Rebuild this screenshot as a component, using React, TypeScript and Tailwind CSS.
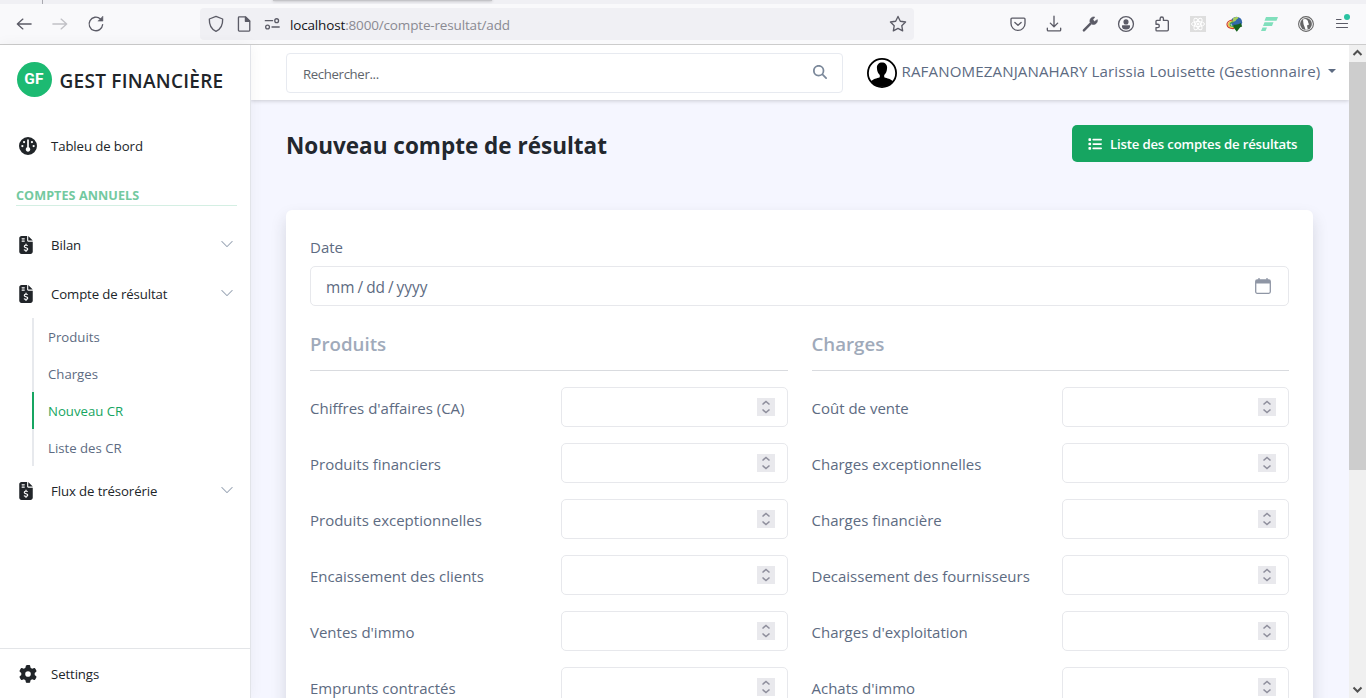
import React from "react";
import { FaGauge, FaFileInvoiceDollar, FaGear, FaList, FaMagnifyingGlass } from "react-icons/fa6";
import { BsChevronDown } from "react-icons/bs";

const S = ({ children }: { children: React.ReactNode }) => (
  <svg width="20" height="20" viewBox="-1 -1 18 18" fill="none" stroke="#5b5b66" strokeWidth="1.2" strokeLinecap="round" strokeLinejoin="round" className="shrink-0">
    {children}
  </svg>
);

function Browser() {
  return (
    <div className="shrink-0">
      <div className="flex h-1 bg-[#f0f0f4]">
        <div className="ml-[42px] h-1 w-px bg-[#a9a9b0]" />
        <div className="ml-[230px] h-px w-[219px] bg-[#c4c4c8] shadow-[0_0_3px_rgba(0,0,0,0.45)]" />
      </div>
      <div className="flex h-[41px] items-center border-b border-[#cccccc] bg-[#f9f9fb]">
        <div className="flex w-[200px] items-center gap-4 pl-[14px]">
          <S><path d="M14.4 8H2M7 3.6 2 8 7 12.4" /></S>
          <div className="opacity-35"><S><path d="M1.6 8H14M9 3.6 14 8 9 12.4" /></S></div>
          <S><path d="M14 8.5A6.1 6.1 0 1 1 12 3.4" /><path d="M10 5.4h4.200V1.2z" fill="#5b5b66" strokeWidth="0.5" /></S>
        </div>
        <div className="flex h-8 w-[714px] items-center rounded bg-[#f0f0f4]">
          <div className="flex w-[90px] items-center gap-2 pl-[6px]">
            <S><path d="M8 1.2 14 3.5c.2 5.400-1.200 9-6 11.100C3.200 12.500 1.800 8.900 2 3.500z" /></S>
            <S><path d="M3 2.300c0-.4.300-.7.700-.7h5.800L13.200 5.300v8.400c0 .4-.3.700-.7.700H3.700c-.4 0-.7-.3-.7-.7z" /><path d="M9.300 1.800v3.700h3.700z" fill="#5b5b66" /></S>
            <S><path d="M2 5h6.500M8 10.700h6.500" /><circle cx="12.200" cy="5" r="1.700" /><circle cx="4" cy="10.700" r="1.700" /></S>
          </div>
          <div className="flex-1 whitespace-nowrap pt-[2px] text-[13.500px] tracking-[-0.16px] text-[#8a8a92]"><span className="text-[#15141a]">localhost</span>:8000/compte-resultat/add</div>
          <div className="pr-[6px]"><S><path d="m8 1.200 2.100 4.300 4.700.7-3.400 3.300.8 4.700L8 12l-4.200 2.200.8-4.700L1.200 6.200l4.700-.7z" /></S></div>
        </div>
        <div className="ml-[94px] flex items-center gap-4">
          <S><path d="M2.600 2.700h10.800c.5 0 .9.400.9.900V7.500a6.300 6.300 0 0 1-12.600 0V3.600c0-.5.400-.9.900-.9z" /><path d="m5.200 6.600 2.800 2.600 2.800-2.600" /></S>
          <S><path d="M8 1v9.400M4.700 7.200 8 10.500l3.300-3.300M2 11.800v1.500c0 .5.400.9.900.9h10.200c.5 0 .9-.4.900-.9v-1.500" /></S>
          <S><path d="m2.500 13.700 6-6" strokeWidth="2.200" /><path d="M8 6.300c-.6-2.600 1.300-5 4.200-4.600L10.600 4.200l1.500 1.500 2.500-1.600C15 7 12.600 9 10 8.200z" fill="#5b5b66" strokeWidth="0.6" /></S>
          <S><circle cx="8" cy="8" r="6.700" /><circle cx="8" cy="6.100" r="1.700" fill="#5b5b66" /><path d="M4.900 9.800h6.200c0 1.800-1.400 2.600-3.100 2.600s-3.100-.8-3.100-2.600z" fill="#5b5b66" /></S>
          <S><path d="M6.300 4.800V3.200a1.500 1.500 0 0 1 3 0v1.600h3.400c.6 0 1 .4 1 1v7.400c0 .6-.4 1-1 1H3.400c-.5 0-.8-.3-.8-.8v-2.200h1.500a1.500 1.500 0 0 0 0-3H2.600V5.600c0-.5.300-.8.800-.8z" /></S>
          <svg width="20" height="20" viewBox="0 0 20 20" fill="none" stroke="#fff" className="shrink-0"><path d="M2 2h16v16H2z" fill="#dedede" stroke="none" /><circle cx="10" cy="10" r="1" fill="#fff" /><ellipse cx="10" cy="10" rx="6.500" ry="2.500" /><ellipse cx="10" cy="10" rx="6.500" ry="2.500" transform="rotate(60 10 10)" /><ellipse cx="10" cy="10" rx="6.500" ry="2.500" transform="rotate(120 10 10)" /></svg>
          <svg width="20" height="20" viewBox="0 0 20 20" fill="none" className="shrink-0">
            <circle cx="12.500" cy="8.300" r="5.600" fill="#3468ac" />
            <path d="M9 4.300c2-1.500 4-1.500 5.500-.8-.5 1.500-2 1.500-3 3.500L9 8z" fill="#a9cf5c" />
            <path d="M8.500 6C5 6.300 2.700 8.500 3 10.700c.4 2.600 3.500 4 7 3.800" stroke="#d0442e" strokeWidth="1.200" />
            <path d="M9 7C6.300 7.300 4.300 9 4.500 10.700c.3 1.800 2.500 2.700 5.500 2.700" stroke="#efc431" strokeWidth="1.200" />
            <path d="M9.300 8.200C7.500 8.300 6 9.500 6 10.700c0 1 1.500 1.600 4 1.600" stroke="#43a047" strokeWidth="1.200" />
            <path d="M9.500 10.500c2.500.5 5 0 7.300-1.500l1.400 3.500-2 .8-3.400 4.500-3.300-4.300z" fill="#17621c" />
          </svg>
          <svg width="20" height="20" viewBox="0 0 20 20" fill="#80dfbc" className="shrink-0"><path d="M6 3h12l-1.500 3.700h-12zM4.500 8.300h9L12 12H3zM2.500 13.500h4.500L5.500 17H1z" /></svg>
          <svg width="20" height="20" viewBox="0 0 20 20" fill="none" stroke="#666" className="shrink-0"><circle cx="10" cy="10" r="7.400" strokeWidth="1.100" /><circle cx="10" cy="10" r="5.900" fill="#666" stroke="none" /><path d="M7 5.600c2.500-1.400 5 0 5.200 2.800l.8 2.200-2 1 .8 3.800-2.300.3C9 13 7.300 11 7.300 8.500z" fill="#fff" stroke="none" /></svg>
          <svg width="20" height="20" viewBox="0 0 20 20" fill="none" stroke="#5b5b66" strokeWidth="1.200" strokeLinecap="round" className="shrink-0 overflow-visible"><path d="M4.500 5.500H9M4.500 9.500h11M4.500 13.500h11" /><circle cx="15" cy="3" r="3" fill="#2ac3a2" stroke="none" /></svg>
        </div>
      </div>
    </div>
  );
}

const Item = ({ icon, label, chevron, className }: { icon: React.ReactNode; label: string; chevron?: boolean; className?: string }) => (
  <a className={`flex h-[49px] items-center pl-[19px] pr-[16px] text-[#212529] ${className ?? ""}`}>
    <span className="flex w-[32px]">{icon}</span>
    <span className="flex-1 whitespace-nowrap pt-[2px] text-[13.200px] tracking-[-0.1px]">{label}</span>
    {chevron && <BsChevronDown className="mb-[2px] size-[14px] text-[#9ca7b6]" />}
  </a>
);

const invoice = <FaFileInvoiceDollar className="h-[18px] w-[14px]" />;

function Sidebar() {
  return (
    <aside className="z-10 flex w-[251px] shrink-0 flex-col border-r border-[#e2e4e9] bg-white shadow-[0_0_14px_rgba(34,39,46,0.05)]">
      <div className="flex h-[68px] items-center pl-[16.500px]">
        <div className="flex size-[35px] items-center justify-center rounded-full bg-[#1cba72] pt-px font-['Roboto',sans-serif] text-[15.500px] font-bold tracking-[0.3px] text-white">GF</div>
        <div className="ml-[8px] mt-[4px] whitespace-nowrap text-[19px] font-[550] tracking-[0.27px] text-[#212529]">GEST FINANCIÈRE</div>
      </div>
      <Item className="mt-[8px]" icon={<FaGauge className="size-[18px]" />} label="Tableu de bord" />
      <div className="ml-4 mr-[13px] mt-[17px] h-[19px] whitespace-nowrap border-b border-[#d4efe3] text-[12.600px] font-bold leading-[17px] tracking-[0.07px] text-[#73c9a0]">COMPTES ANNUELS</div>
      <Item className="mt-[14px]" icon={invoice} label="Bilan" chevron />
      <Item icon={invoice} label="Compte de résultat" chevron />
      <div className="ml-8 text-[13.200px] text-[#5d6b82]">
        {["Produits", "Charges", "Nouveau CR", "Liste des CR"].map((t) => (
          <div key={t} className={`flex h-[37px] items-center border-l-2 pl-[14px] pt-[2px] ${t === "Nouveau CR" ? "border-[#16a561] text-[#16a561]" : "border-[#e7e9ed]"}`}>{t}</div>
        ))}
      </div>
      <Item icon={invoice} label="Flux de trésorérie" chevron />
      <div className="mt-auto h-[50px] border-t border-[#e3e5e8]">
        <Item icon={<FaGear className="size-[18px]" />} label="Settings" />
      </div>
    </aside>
  );
}

function Header() {
  return (
    <header className="z-[5] flex h-[55px] shrink-0 items-center bg-white pl-[35px] shadow-[0_1px_4px_rgba(0,0,0,0.18)]">
      <div className="flex h-10 w-[557px] items-center justify-between rounded border border-[#e7eaf0] pl-4 pr-[15px] text-[13.200px] text-[#60656b]">
        <span className="pt-[5px] tracking-[-0.35px]">Rechercher...</span>
        <FaMagnifyingGlass className="mb-[2px] size-[14px] text-[#7b889a]" />
      </div>
      <svg width="30" height="30" viewBox="0 0 30 30" className="ml-6 shrink-0">
        <circle cx="15" cy="15" r="14.100" fill="#fff" stroke="#000" strokeWidth="1.800" />
        <path d="M15 4.500c3.200 0 5.200 2.200 5.100 5.200-.1 3.400-1.300 6-2.900 7.200v2.300c3 1.300 6.800 1.500 8.800 4.300a14 14 0 0 1-22 0c2-2.800 5.800-3 8.800-4.300v-2.300c-1.600-1.200-2.800-3.800-2.900-7.200-.1-3 1.900-5.200 5.100-5.200z" />
      </svg>
      <span className="mb-[2px] ml-[4.500px] whitespace-nowrap text-[15.100px] tracking-[0.12px] text-[#5d6b82]">RAFANOMEZANJANAHARY Larissia Louisette (Gestionnaire)</span>
      <svg width="8" height="4" viewBox="0 0 8 4" className="mb-[4px] ml-2 shrink-0" fill="#5d6b82"><path d="M0 0h8L4 4z" /></svg>
    </header>
  );
}

const Row = ({ label }: { label: string }) => (
  <div className="mb-4 flex h-10 items-center">
    <label className="w-[250.5px] whitespace-nowrap pt-[3px] text-[15px] text-[#5d6b82]">{label}</label>
    <div className="flex h-10 flex-1 items-center justify-end rounded-[5px] border border-[#e7e8ec] pr-3">
      <svg width="18" height="18" viewBox="0 0 18 18" fill="none" stroke="#8f8f9d" strokeWidth="1.600"><path d="M0 0h18v18H0z" fill="#e9e9ed" stroke="none" /><path d="M5.500 6.500 9 3.500l3.500 3M5.500 11.500l3.500 3 3.500-3" /></svg>
    </div>
  </div>
);

const Column = ({ title, rows }: { title: string; rows: string[] }) => (
  <div className="flex-1">
    <h5 className="mb-4 h-[41px] border-b border-[#d9dbdf] text-[18.700px] font-semibold leading-7 text-[#a0aaba]">{title}</h5>
    {rows.map((r) => <Row key={r} label={r} />)}
  </div>
);

export default function App() {
  return (
    <div className="flex h-[698px] w-[1366px] flex-col overflow-hidden bg-white font-['Open_Sans','Noto_Sans',sans-serif]">
      <Browser />
      <div className="flex min-h-0 flex-1">
        <Sidebar />
        <div className="flex w-[1098px] flex-col overflow-hidden bg-[#f5f6ff]">
          <Header />
          <main className="flex flex-1 flex-col overflow-hidden pl-[35px] pr-[36px]">
            <div className="mt-[25px] flex h-[37px] items-center justify-between">
              <h1 className="whitespace-nowrap pt-[5px] text-[22.500px] font-bold text-[#22272e]">Nouveau compte de résultat</h1>
              <a className="flex h-[37px] w-[241px] items-center rounded-[5px] bg-[#16a561] pl-4 text-white">
                <FaList className="size-[14px]" />
                <span className="ml-2 whitespace-nowrap pt-[2px] text-[13.200px] font-semibold tracking-[-0.18px]">Liste des comptes de résultats</span>
              </a>
            </div>
            <section className="mt-12 h-[700px] shrink-0 rounded-[6px] bg-white px-6 pt-6 shadow-[0_8px_16px_rgba(34,39,46,0.15)]">
              <div className="flex h-8 items-start pt-[2px] text-[15px] text-[#5d6b82]">Date</div>
              <div className="flex h-10 items-center justify-between rounded-[5px] border border-[#e7e8ec] pl-[15px] pr-[17px] text-[15px] text-[#5d6b82]">
                <span className="pt-1 text-[15.400px] [word-spacing:-1px]">mm / dd / yyyy</span>
                <svg width="16" height="16" viewBox="0 0 16 16" fill="none" stroke="#8f96a5" strokeWidth="1.300"><rect x=".7" y="2" width="14.600" height="13.300" rx="1.500" /><path d="M1 2h14v3.500H1z" fill="#8f96a5" stroke="none" /><path d="M4 0v3M12 0v3" /></svg>
              </div>
              <div className="mt-6 flex gap-6">
                <Column title="Produits" rows={["Chiffres d'affaires (CA)", "Produits financiers", "Produits exceptionnelles", "Encaissement des clients", "Ventes d'immo", "Emprunts contractés"]} />
                <Column title="Charges" rows={["Coût de vente", "Charges exceptionnelles", "Charges financière", "Decaissement des fournisseurs", "Charges d'exploitation", "Achats d'immo"]} />
              </div>
            </section>
          </main>
        </div>
        <div className="flex w-[17px] flex-col items-center bg-[#f0f0f0]">
          <svg width="17" height="17" viewBox="0 0 17 17" fill="none" stroke="#505050" strokeWidth="2"><path d="M4.500 10 8.500 6l4 4" /></svg>
          <div className="h-[408px] w-full bg-[#cdcdcd]" />
          <svg width="17" height="17" viewBox="0 0 17 17" fill="none" stroke="#505050" strokeWidth="2" className="mt-auto"><path d="M4.500 6.500l4 4 4-4" /></svg>
        </div>
      </div>
    </div>
  );
}
